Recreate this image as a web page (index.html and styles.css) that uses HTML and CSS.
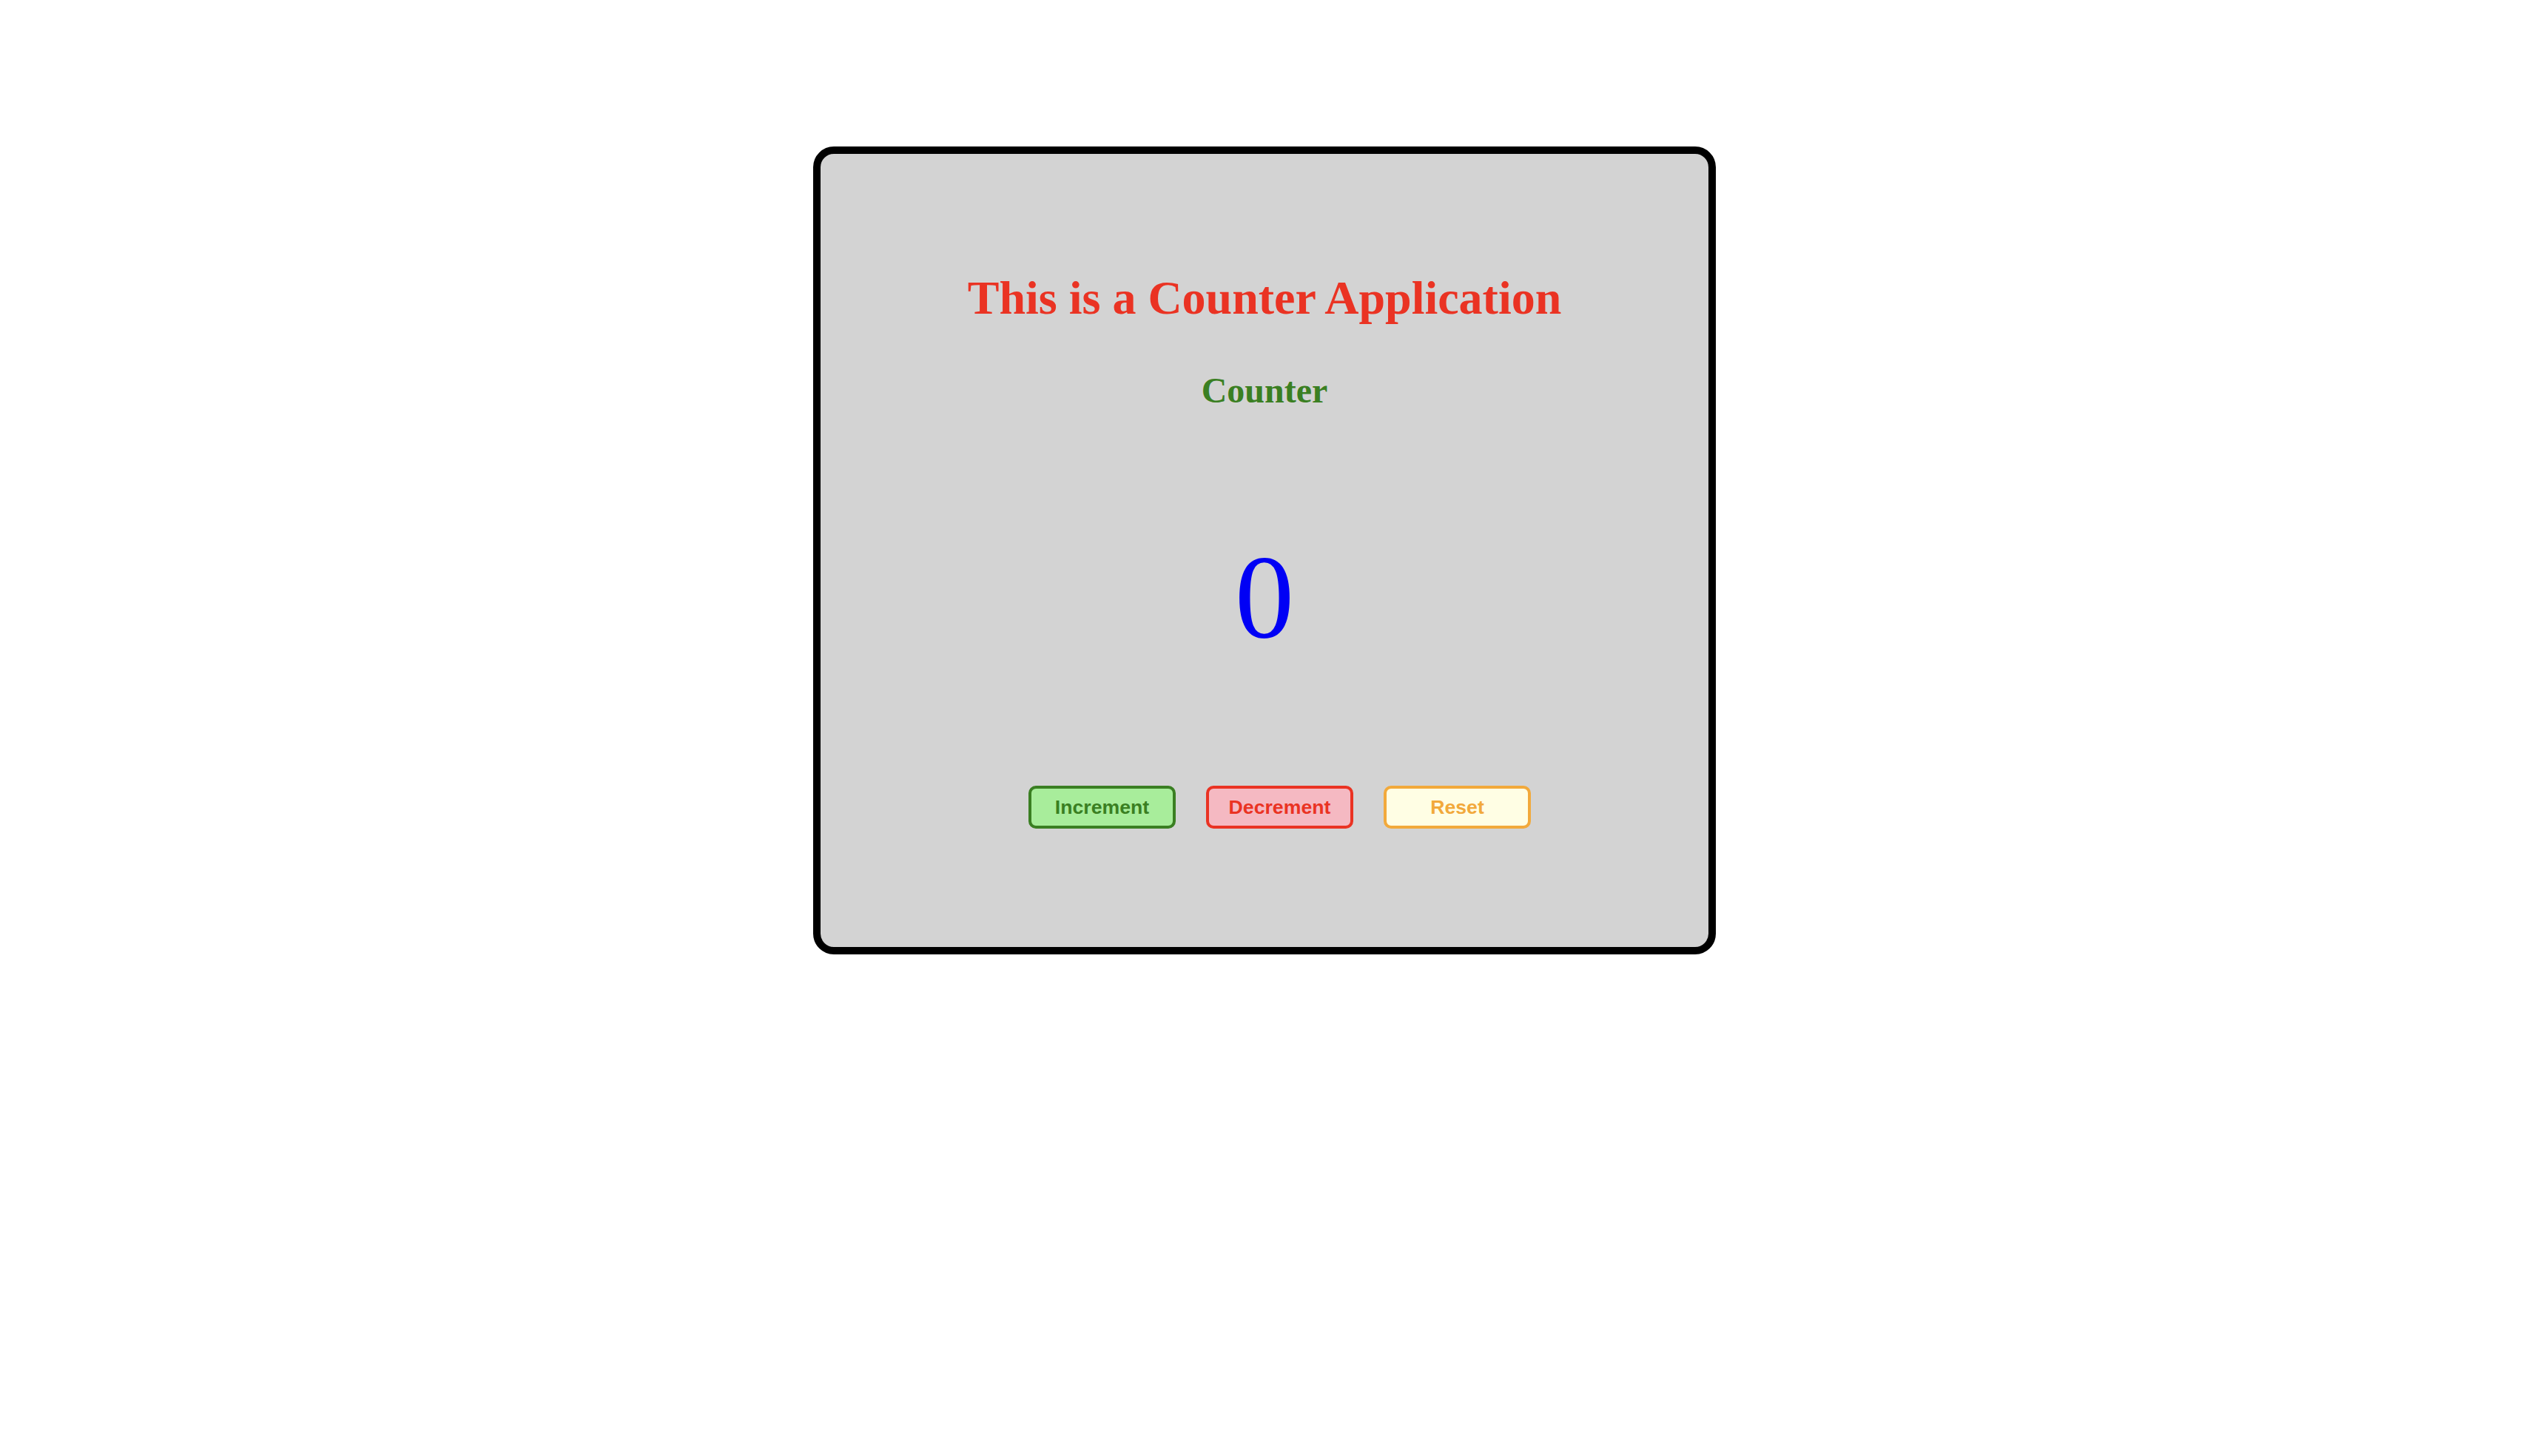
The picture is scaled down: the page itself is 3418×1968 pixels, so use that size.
FILE: index.html
```html
<!DOCTYPE html>
<html lang="en">
<head>
<meta charset="utf-8">
<title>Counter Application</title>
<link rel="stylesheet" href="styles.css">
</head>
<body>
<div class="card">
  <h1 class="title">This is a Counter Application</h1>
  <h2 class="subtitle">Counter</h2>
  <div class="count">0</div>
  <div class="buttons">
    <button class="btn btn-inc">Increment</button>
    <button class="btn btn-dec">Decrement</button>
    <button class="btn btn-reset">Reset</button>
  </div>
</div>
</body>
</html>
```

FILE: styles.css
```css
html, body {
  margin: 0;
  padding: 0;
  background: #ffffff;
}

body {
  font-family: "Liberation Serif", "Times New Roman", serif;
}

.card {
  box-sizing: border-box;
  width: 1220px;
  margin: 198px auto 0;
  padding: 158px 0 160px;
  background: #d3d3d3;
  border: 10px solid #000000;
  border-radius: 28px;
  display: flex;
  flex-direction: column;
  align-items: center;
}

.title {
  margin: 0;
  font-size: 64px;
  line-height: 74px;
  font-weight: bold;
  color: #ea3323;
}

.subtitle {
  margin: 60px 0 0;
  font-size: 48px;
  line-height: 56px;
  font-weight: bold;
  color: #3a7f22;
}

.count {
  margin: 159px 0 0;
  font-size: 160px;
  line-height: 184px;
  color: #0000f5;
}

.buttons {
  margin-top: 163px;
  display: flex;
  justify-content: center;
}

.btn {
  box-sizing: border-box;
  width: 199px;
  height: 58px;
  margin: 0 0 0 41px;
  padding: 0;
  border-width: 4px;
  border-style: solid;
  border-radius: 10px;
  font-family: "Liberation Sans", Arial, sans-serif;
  font-size: 26.67px;
  font-weight: bold;
}

.btn-inc {
  background: #a8ed9b;
  border-color: #3a7f22;
  color: #3a7f22;
}

.btn-dec {
  background: #f5b9c2;
  border-color: #ea3323;
  color: #ea3323;
}

.btn-reset {
  background: #fffee4;
  border-color: #f2a93b;
  color: #f2a93b;
}
```
